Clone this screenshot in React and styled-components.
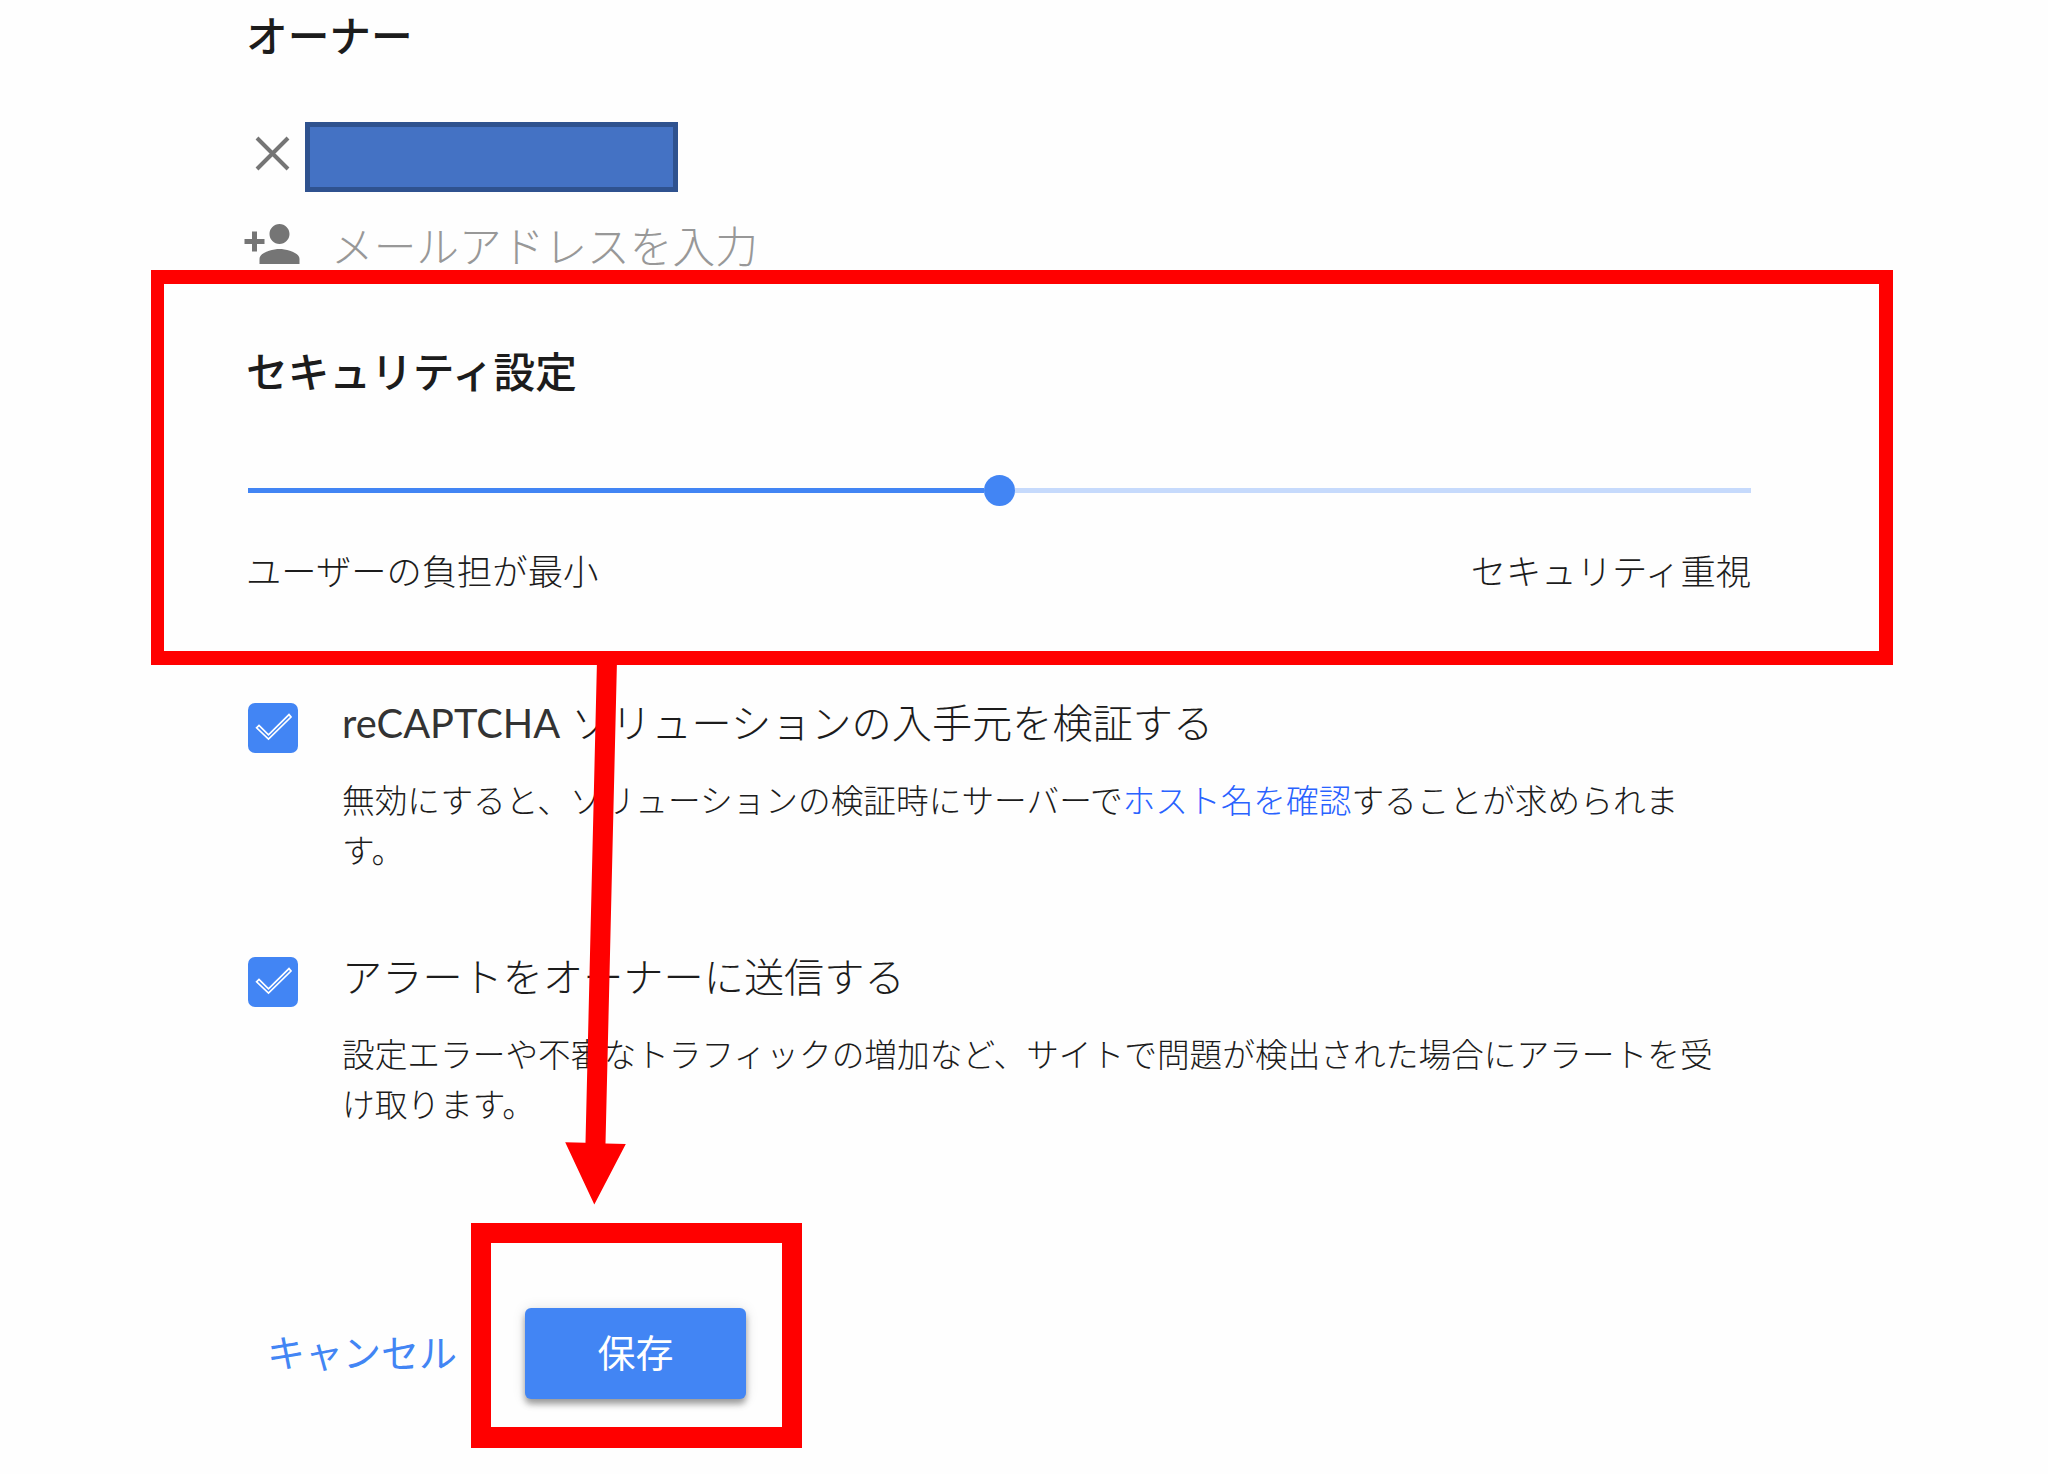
import React, { useState } from 'react';
import styled, { createGlobalStyle } from 'styled-components';

const GlobalStyle = createGlobalStyle`
  * {
    box-sizing: border-box;
  }

  body {
    margin: 0;
    background: #fefefe;
    color: #1c1c1c;
    font-family: Lato, 'Noto Sans CJK JP', sans-serif;
  }
`;

const Page = styled.main`
  position: relative;
  width: 2048px;
  height: 1474px;
  padding: 8px 297px 0 248px;
  overflow: hidden;
`;

const Heading = styled.h2`
  margin: 0 0 0 -2px;
  font-size: 41.7px;
  font-weight: 500;
  line-height: 56px;
  color: #1c1c1c;
`;

const OwnerRow = styled.div`
  display: flex;
  align-items: center;
  height: 70px;
  margin-top: 58px;
  padding-left: 7px;
`;

const RemoveButton = styled.button`
  display: flex;
  width: 50px;
  height: 40px;
  margin-top: -6px;
  padding: 0;
  border: none;
  background: none;
  color: #757575;
`;

const OwnerName = styled.div`
  width: 373px;
  height: 70px;
  border: 5px solid #2f528f;
  background: #4472c4;
`;

const EmailRow = styled.label`
  display: flex;
  align-items: center;
  height: 60px;
  margin: 22px 0 0 -6px;
  color: #757575;
`;

const EmailInput = styled.input`
  width: 500px;
  height: 60px;
  margin-left: 29px;
  padding: 4px 0 0;
  border: none;
  outline: none;
  background: transparent;
  font: 300 42.7px Lato, 'Noto Sans CJK JP', sans-serif;

  &::placeholder {
    color: #989898;
  }
`;

const Security = styled.section`
  margin-top: 70px;
`;

const Slider = styled.div`
  display: flex;
  align-items: center;
  height: 31px;
  margin-top: 75px;
`;

const Track = styled.div`
  flex: 1;
  height: 5px;
  background: ${(props) => props.$active ? '#4285f4' : '#c6dafc'};
`;

const Thumb = styled.div`
  width: 31px;
  height: 31px;
  border-radius: 50%;
  background: #4285f4;
`;

const SliderLabels = styled.div`
  display: flex;
  justify-content: space-between;
  margin: 41px 0 0 -2px;
  font-size: 35.3px;
  font-weight: 300;
  line-height: 50px;
`;

const Options = styled.section`
  display: flex;
  flex-direction: column;
  gap: 76px;
  margin-top: 101px;
`;

const Option = styled.div`
  display: flex;
  height: 178px;
`;

const Checkbox = styled.button`
  flex: none;
  width: 50px;
  height: 50px;
  margin: 5px 44px 0 0;
  padding: 0;
  border: none;
  border-radius: 7px;
  background: ${(props) => props.$checked ? '#4285f4' : '#c6dafc'};
`;

const OptionTitle = styled.div`
  font-size: 40.2px;
  font-weight: 300;
  line-height: 50px;
`;

const Latin = styled.span`
  color: #333;
  font-size: 39.8px;
  font-weight: 400;
`;

const OptionText = styled.p`
  width: 1390px;
  margin: 28px 0 0;
  font-size: 32.7px;
  font-weight: 300;
  line-height: 50.3px;
  white-space: nowrap;
`;

const Link = styled.a`
  color: #2962ff;
  text-decoration: none;
`;

const Actions = styled.div`
  display: flex;
  gap: 68px;
  margin-top: 178px;
  padding-left: 19px;
`;

const Button = styled.button`
  display: flex;
  justify-content: center;
  align-items: center;
  height: 91px;
  padding: 0 0 7px;
  border: none;
  border-radius: 6px;
  font: 400 38px Lato, 'Noto Sans CJK JP', sans-serif;
  white-space: nowrap;
  width: ${(props) => props.$primary ? '221px' : '190px'};
  color: ${(props) => props.$primary ? '#fff' : '#4285f4'};
  background: ${(props) => props.$primary ? '#4285f4' : 'none'};
  box-shadow: ${(props) => props.$primary ? '0 5px 6px rgba(0,0,0,0.35), 0 1px 14px rgba(0,0,0,0.12)' : 'none'};
`;

const Highlight = styled.div`
  position: absolute;
  left: ${(props) => props.$left}px;
  top: ${(props) => props.$top}px;
  width: ${(props) => props.$width}px;
  height: ${(props) => props.$height}px;
  border-style: solid;
  border-color: #f00;
  border-width: ${(props) => props.$thickness};
  pointer-events: none;
`;

const Arrow = styled.svg`
  position: absolute;
  left: 560px;
  top: 660px;
  pointer-events: none;
`;

function CheckOption({ title, children }) {
  const [checked, setChecked] = useState(true);

  return (
    <Option>
      <Checkbox $checked={checked} onClick={() => setChecked(prev => !prev)}>
        {checked && (
          <svg width="50" height="50" viewBox="0 0 50 50" fill="none" stroke="#fff" strokeWidth="1.7">
            <path d="M8.6 24.8 L11 22.4 L20.5 31.8 L41 11.6 L43 14 L20.5 36 Z" />
          </svg>
        )}
      </Checkbox>
      <div>
        <OptionTitle>{title}</OptionTitle>
        <OptionText>{children}</OptionText>
      </div>
    </Option>
  );
}

function App() {
  return (
    <>
      <GlobalStyle />
      <Page>
        <Heading>オーナー</Heading>
        <OwnerRow>
          <RemoveButton>
            <svg width="36" height="40" viewBox="0 0 36 40" stroke="currentColor" strokeWidth="4">
              <path d="M2 4 L33 35 M33 4 L2 35" />
            </svg>
          </RemoveButton>
          <OwnerName />
        </OwnerRow>
        <EmailRow>
          <svg width="60" height="60" viewBox="0 0 24 24" fill="currentColor">
            <path d="M15 12c2.21 0 4-1.79 4-4s-1.79-4-4-4-4 1.79-4 4 1.79 4 4 4zm-9-2V7H4v3H1v2h3v3h2v-3h3v-2H6zm9 4c-2.67 0-8 1.34-8 4v2h16v-2c0-2.66-5.33-4-8-4z" />
          </svg>
          <EmailInput placeholder="メールアドレスを入力" />
        </EmailRow>

        <Security>
          <Heading>セキュリティ設定</Heading>
          <Slider>
            <Track $active />
            <Thumb />
            <Track />
          </Slider>
          <SliderLabels>
            <span>ユーザーの負担が最小</span>
            <span>セキュリティ重視</span>
          </SliderLabels>
        </Security>

        <Options>
          <CheckOption title={<><Latin>reCAPTCHA</Latin> ソリューションの入手元を検証する</>}>
            無効にすると、ソリューションの検証時にサーバーで<Link>ホスト名を確認</Link>することが求められま<br />す。
          </CheckOption>
          <CheckOption title="アラートをオーナーに送信する">
            設定エラーや不審なトラフィックの増加など、サイトで問題が検出された場合にアラートを受<br />け取ります。
          </CheckOption>
        </Options>

        <Actions>
          <Button>キャンセル</Button>
          <Button $primary>保存</Button>
        </Actions>

        <Highlight $left={151} $top={270} $width={1742} $height={395} $thickness="14px 14px 14px 13px" />
        <Highlight $left={471} $top={1223} $width={331} $height={225} $thickness="20px 20px 21px" />
        <Arrow width="80" height="550" viewBox="560 660 80 550" fill="#f00">
          <path d="M597 660 L617 660 L605.5 1143.5 L625.8 1144 L594.3 1204.5 L565.2 1142.3 L585.5 1142.8 Z" />
        </Arrow>
      </Page>
    </>
  );
}

export default App;
